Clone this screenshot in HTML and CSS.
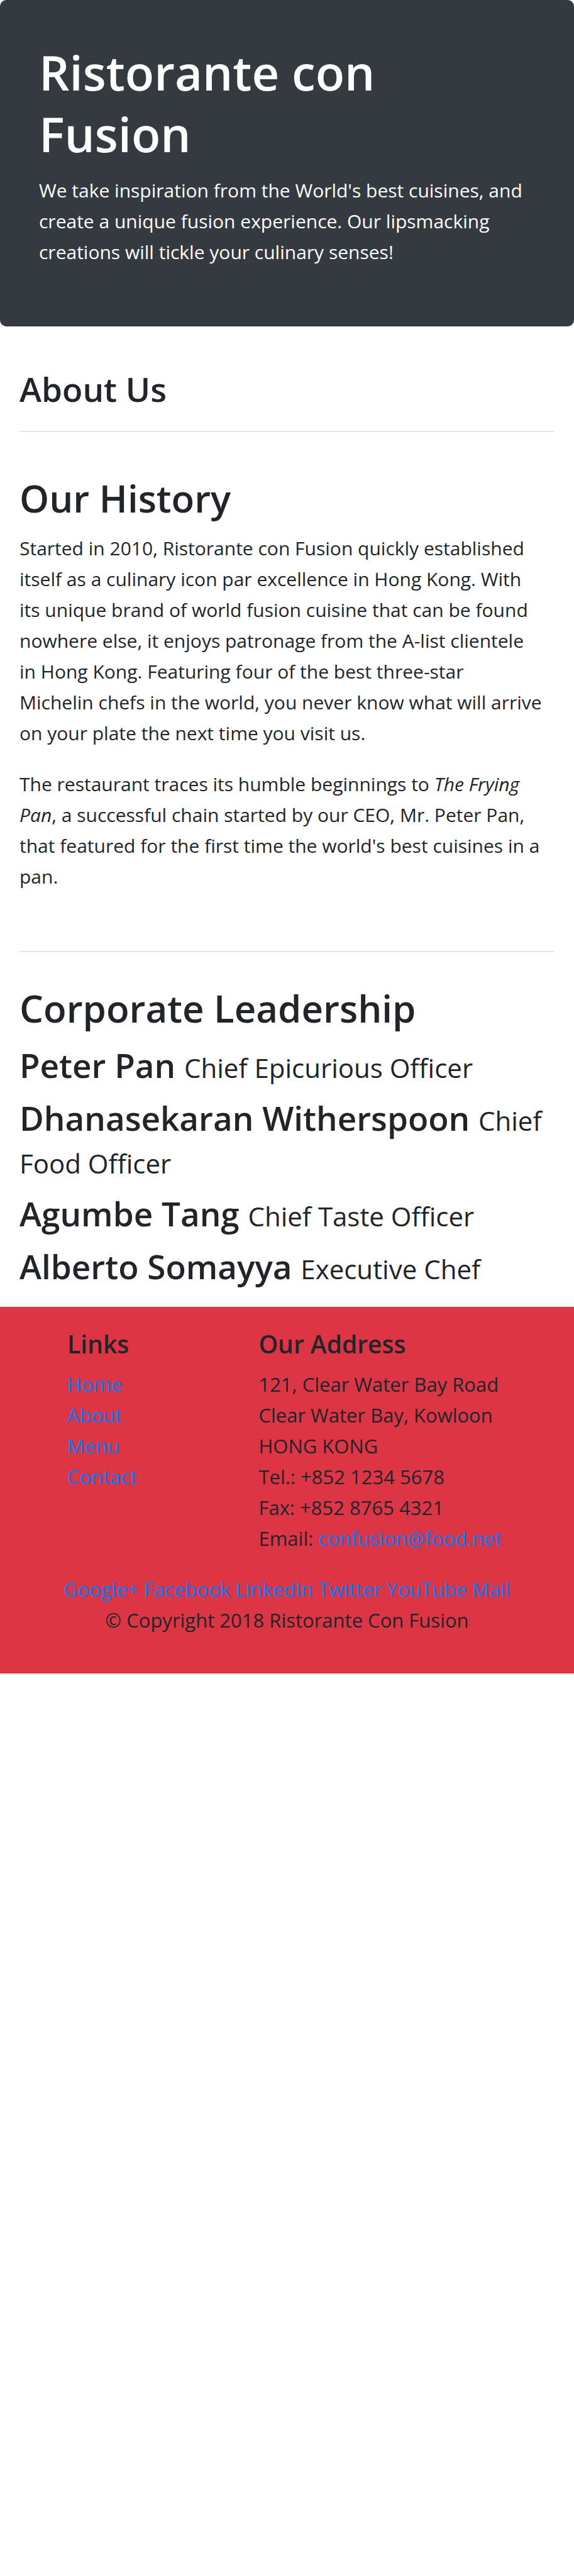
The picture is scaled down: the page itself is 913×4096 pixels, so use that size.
FILE: index.html
```html
<!DOCTYPE html>
<html lang="en">
<head>
<meta charset="utf-8">
<meta name="viewport" content="width=device-width, initial-scale=1">
<title>Ristorante Con Fusion: About Us</title>
<link rel="stylesheet" href="styles.css">
</head>
<body>
<header class="jumbotron">
  <h1 class="jumbotron-title">Ristorante con Fusion</h1>
  <p class="text">We take inspiration from the World's best cuisines, and create a unique fusion experience. Our lipsmacking creations will tickle your culinary senses!</p>
</header>
<main class="container">
  <div class="page-head">
    <h3 class="name">About Us</h3>
    <hr class="rule">
  </div>
  <section class="history">
    <h2 class="section-title">Our History</h2>
    <p class="text">Started in 2010, Ristorante con Fusion quickly established itself as a culinary icon par excellence in Hong Kong. With<br> its unique brand of world fusion cuisine that can be found nowhere else, it enjoys patronage from the A-list clientele<br> in Hong Kong. Featuring four of the best three-star<br> Michelin chefs in the world, you never know what will arrive<br> on your plate the next time you visit us.</p>
    <p class="text">The restaurant traces its humble beginnings to <em>The Frying Pan</em>, a successful chain started by our CEO, Mr. Peter Pan, that featured for the first time the world's best cuisines in a pan.</p>
  </section>
  <hr class="rule">
  <section class="leadership">
    <h2 class="section-title">Corporate Leadership</h2>
    <h3 class="name">Peter Pan <small class="role">Chief Epicurious Officer</small></h3>
    <h3 class="name">Dhanasekaran Witherspoon <small class="role">Chief Food Officer</small></h3>
    <h3 class="name">Agumbe Tang <small class="role">Chief Taste Officer</small></h3>
    <h3 class="name">Alberto Somayya <small class="role">Executive Chef</small></h3>
  </section>
</main>
<footer class="footer">
  <div class="footer-columns">
    <nav class="footer-links">
      <h5 class="footer-title">Links</h5>
      <ul class="link-list">
        <li><a class="link" href="#">Home</a></li>
        <li><a class="link" href="#">About</a></li>
        <li><a class="link" href="#">Menu</a></li>
        <li><a class="link" href="#">Contact</a></li>
      </ul>
    </nav>
    <div class="footer-address">
      <h5 class="footer-title">Our Address</h5>
      <address class="address">
        121, Clear Water Bay Road<br>
        Clear Water Bay, Kowloon<br>
        HONG KONG<br>
        Tel.: +852 1234 5678<br>
        Fax: +852 8765 4321<br>
        Email: <a class="link" href="mailto:confusion@food.net">confusion@food.net</a>
      </address>
    </div>
  </div>
  <div class="social">
    <a class="link" href="#">Google+</a>
    <a class="link" href="#">Facebook</a>
    <a class="link" href="#">LinkedIn</a>
    <a class="link" href="#">Twitter</a>
    <a class="link" href="#">YouTube</a>
    <a class="link" href="#">Mail</a>
  </div>
  <p class="copyright">© Copyright 2018 Ristorante Con Fusion</p>
</footer>
</body>
</html>
```

FILE: styles.css
```css
*, *::before, *::after { box-sizing: border-box; }

body {
  margin: 0;
  background: #fff;
  color: #212529;
  font-family: "Open Sans", "Noto Sans", sans-serif;
  font-size: 30px;
  line-height: 49px;
}

h1, h2, h3, h5 {
  margin: 0 0 16px;
  padding-top: 2px;
  font-weight: 600;
}

.text { margin: 0 0 32px; }

.jumbotron {
  padding: 64px 62px 62px;
  margin-bottom: 64px;
  border-radius: 10px;
  background: #343a40;
  color: #fff;
}
.jumbotron-title { font-size: 76px; line-height: 98px; }

.container { padding: 0 31px; }

.page-head { padding-bottom: 32px; }

.rule {
  margin: 32px 0;
  border: 0;
  border-top: 2px solid rgba(0, 0, 0, 0.1);
}

.section-title { font-size: 60px; line-height: 78px; }

.history { padding-bottom: 30px; }

.leadership { padding: 16px 0; }

.name {
  margin-bottom: 14px;
  font-size: 53px;
  line-height: 68px;
}
.role {
  font-size: 42px;
  font-weight: 400;
  line-height: 1;
}

.footer {
  padding: 32px 0 30px;
  background: #dc3545;
  font-size: 31px;
}

.footer-columns {
  display: grid;
  grid-template-columns: 4fr 7fr;
  margin-left: 8.333%;
}
.footer-links, .footer-address { padding: 0 31px; }
.footer-title { font-size: 39px; }

.link-list { margin: 0; padding: 0; list-style: none; }
.link { color: #007bff; text-decoration: none; }

.address { margin-bottom: 32px; font-style: normal; }

.social { text-align: center; }
.copyright { margin: 0 0 30px; text-align: center; }
```
